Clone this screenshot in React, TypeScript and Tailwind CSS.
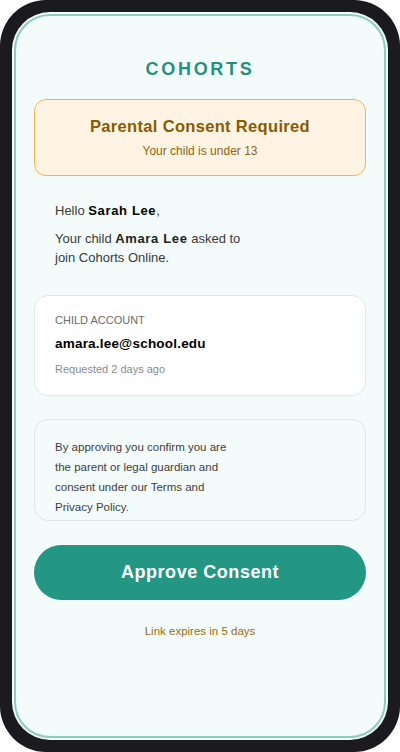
export default function App() {
  return (
    <div className="w-[400px] h-[752px] bg-white" style={{ fontFamily: '"Liberation Sans", Arial, sans-serif' }}>
      <div className="h-full rounded-[46px] bg-[#1b1a1f] p-3">
        <div className="h-full rounded-[38px] bg-[#f3fbfb] p-[2px]">
          <div className="h-full rounded-[36px] border-2 border-[#8ccbbd] px-[18px] pt-[41px]">
            <h1 className="text-center text-[18px] leading-6 font-bold tracking-[0.15em] text-[#23917f]">COHORTS</h1>

            <div className="mt-[18px] rounded-xl border-[1.5px] border-[#f0b550] bg-[#fff4e3] pt-[16px] pb-[16px] text-center">
              <h2 className="text-[16.5px] leading-5 font-bold tracking-[0.02em] text-[#8a5a00]">Parental Consent Required</h2>
              <p className="mt-[7px] text-[12px] leading-4 text-[#8f6414]">Your child is under 13</p>
            </div>

            <div className="mt-[25px] px-[21px] text-[13px] text-[#3a3a3a]">
              <p className="leading-5">
                Hello <span className="font-bold tracking-[0.05em] text-black">Sarah Lee</span>,
              </p>
              <p className="mt-[8px] leading-[19px]">
                Your child <span className="font-bold tracking-[0.05em] text-[#222]">Amara Lee</span> asked to
                <br />
                join Cohorts Online.
              </p>
            </div>

            <div className="mt-[28px] rounded-[14px] border border-[#dfe7e6] bg-white px-5 pt-[16px] pb-[18px]">
              <p className="text-[11px] leading-4 text-[#6b6b6b]">CHILD ACCOUNT</p>
              <p className="mt-[8px] text-[13.5px] leading-4 font-bold tracking-[0.015em] text-black">amara.lee@school.edu</p>
              <p className="mt-[9px] text-[11px] leading-4 text-[#8a8a8a]">Requested 2 days ago</p>
            </div>

            <div className="mt-[23px] rounded-[14px] border border-[#dde6e6] bg-[#f4fbfb] px-5 pt-[17px] pb-[3px] text-[11.5px] leading-5 text-[#3d3d3d]">
              <p>
                By approving you confirm you are
                <br />
                the parent or legal guardian and
                <br />
                consent under our Terms and
                <br />
                Privacy Policy.
              </p>
            </div>

            <button className="mt-[24px] h-[55px] w-full rounded-full bg-[#239684] text-[18px] font-bold tracking-[0.03em] text-white">
              Approve Consent
            </button>

            <p className="mt-[23px] text-center text-[11.5px] leading-4 text-[#9a6b0e]">Link expires in 5 days</p>
          </div>
        </div>
      </div>
    </div>
  );
}
